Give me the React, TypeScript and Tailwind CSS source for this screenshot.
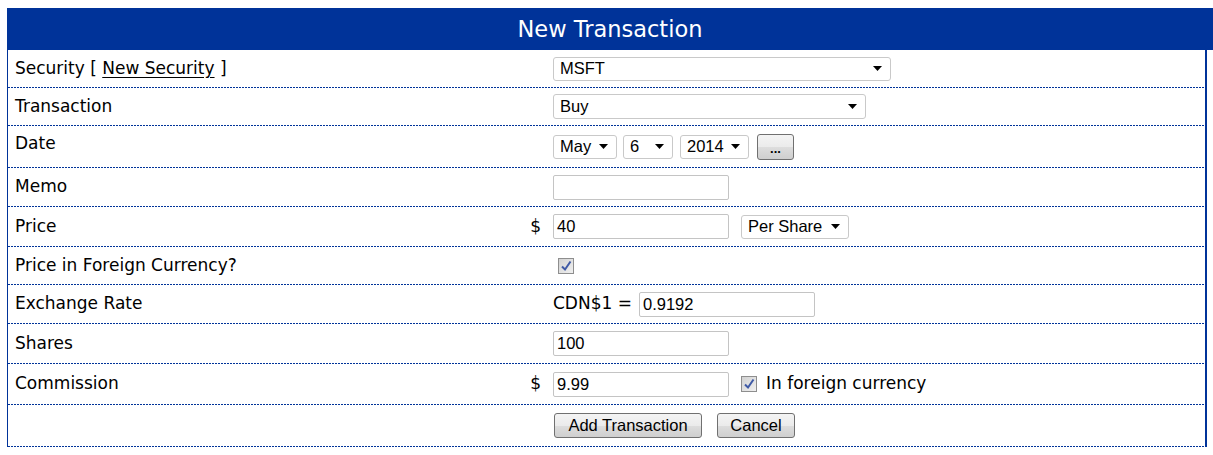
import React from "react";

const LABEL_FONT = "font-['DejaVu_Sans',sans-serif] text-[17px] text-black";
const CTRL_FONT = "font-['Liberation_Sans',Arial,sans-serif] text-[16.5px] text-black";

function Arrow() {
  return (
    <svg width="9" height="5" viewBox="0 0 9 5" className="shrink-0">
      <path d="M0 0 L9 0 L4.5 5 Z" fill="#000" />
    </svg>
  );
}

function Select({ w, h = 24, text }: { w: string; h?: number; text: string }) {
  return (
    <div
      className={`${w} ${CTRL_FONT} flex items-center justify-between border border-[#c9c9c9] rounded-[3px] bg-white pl-[6px] pr-[8px] leading-none`}
      style={{ height: h }}
    >
      <span>{text}</span>
      <Arrow />
    </div>
  );
}

function Input({ w, value }: { w: string; value: string }) {
  return (
    <div
      className={`${w} h-[25px] ${CTRL_FONT} flex items-center border border-[#c4c4c4] rounded-[2px] bg-white pl-[3px] leading-none`}
    >
      {value}
    </div>
  );
}

function Checkbox() {
  return (
    <div className="w-[16px] h-[16px] border border-[#8e8e8e] bg-[linear-gradient(135deg,#d2d2d2,#f0f0f0)] flex items-center justify-center">
      <svg width="12" height="12" viewBox="0 0 12 12">
        <path d="M2 6.5 L5 9.5 L10.5 1.5" stroke="#3f5aa6" strokeWidth="2" fill="none" />
      </svg>
    </div>
  );
}

function Button({ w, h, children }: { w: string; h: string; children: React.ReactNode }) {
  return (
    <div
      className={`${w} ${h} ${CTRL_FONT} flex items-center justify-center border border-[#707070] rounded-[3px] bg-[linear-gradient(to_bottom,#f4f4f4_0%,#ebebeb_50%,#dddddd_51%,#cfcfcf_100%)] leading-none`}
    >
      {children}
    </div>
  );
}

function Row({
  h,
  label,
  dollar,
  labelClass = "",
  children,
}: {
  h: string;
  label?: React.ReactNode;
  dollar?: boolean;
  labelClass?: string;
  children?: React.ReactNode;
}) {
  return (
    <div className={`${h} flex flex-col`}>
      <div className="flex-1 flex items-center">
        <div className={`w-[533px] pl-[7px] flex items-center justify-between ${LABEL_FONT}`}>
          <span className={labelClass}>{label}</span>
          {dollar ? <span>$</span> : null}
        </div>
        <div className="ml-[12px] flex items-center">{children}</div>
      </div>
      <div className="h-[1px] w-full bg-[linear-gradient(to_right,#003399_2px,transparent_2px)] bg-[length:3px_1px]" />
    </div>
  );
}

export default function App() {
  return (
    <div className="bg-white w-[1213px] h-[455px] overflow-hidden pl-[7px] pt-[8px]">
      <div className="w-[1206px] h-[42px] bg-[#003399] flex items-center justify-center pt-[2px]">
        <span className="font-['DejaVu_Sans',sans-serif] text-[22.5px] text-white">New Transaction</span>
      </div>
      <div className="w-[1200px] border-l border-r-2 border-[#003399]">
        <Row
          h="h-[38px]"
          label={
            <>
              Security [ <span className="underline underline-offset-[3px]">New Security</span> ]
            </>
          }
        >
          <Select w="w-[338px]" text="MSFT" />
        </Row>
        <Row h="h-[38px]" label="Transaction">
          <Select w="w-[313px]" h={25} text="Buy" />
        </Row>
        <Row h="h-[42px]" label="Date" labelClass="relative -top-[3px]">
          <div className="flex items-center">
            <Select w="w-[64px]" text="May" />
            <div className="w-[6px]" />
            <Select w="w-[50px]" text="6" />
            <div className="w-[7px]" />
            <Select w="w-[69px]" text="2014" />
            <div className="w-[8px]" />
            <Button w="w-[37px]" h="h-[26px]">
              <span className="text-[13px] font-bold relative top-[2px]">...</span>
            </Button>
          </div>
        </Row>
        <Row h="h-[39px]" label="Memo">
          <Input w="w-[176px]" value="" />
        </Row>
        <Row h="h-[40px]" label="Price" dollar>
          <div className="flex items-center">
            <Input w="w-[176px]" value="40" />
            <div className="w-[12px]" />
            <Select w="w-[108px]" text="Per Share" />
          </div>
        </Row>
        <Row h="h-[38px]" label="Price in Foreign Currency?">
          <div className="pl-[5px]">
            <Checkbox />
          </div>
        </Row>
        <Row h="h-[39px]" label="Exchange Rate">
          <div className="flex items-center">
            <span className={LABEL_FONT}>CDN$1 =</span>
            <div className="w-[7px]" />
            <Input w="w-[176px]" value="0.9192" />
          </div>
        </Row>
        <Row h="h-[40px]" label="Shares">
          <Input w="w-[176px]" value="100" />
        </Row>
        <Row h="h-[41px]" label="Commission" dollar>
          <div className="flex items-center">
            <Input w="w-[176px]" value="9.99" />
            <div className="w-[12px]" />
            <Checkbox />
            <div className="w-[9px]" />
            <span className={LABEL_FONT}>In foreign currency</span>
          </div>
        </Row>
        <Row h="h-[42px]">
          <div className="flex items-center pl-[1px]">
            <Button w="w-[148px]" h="h-[25px]">Add Transaction</Button>
            <div className="w-[15px]" />
            <Button w="w-[78px]" h="h-[25px]">Cancel</Button>
          </div>
        </Row>
      </div>
    </div>
  );
}
